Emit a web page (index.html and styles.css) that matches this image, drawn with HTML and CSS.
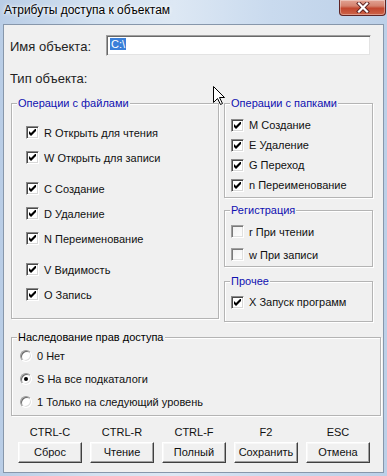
FILE: index.html
```html
<!DOCTYPE html>
<html lang="ru">
<head>
<meta charset="utf-8">
<title>Атрибуты доступа к объектам</title>
<link rel="stylesheet" href="styles.css">
</head>
<body>
<div class="window">
  <div class="titlebar">
    <span class="title">Атрибуты доступа к объектам</span>
    <div class="close">
      <svg width="14" height="11" viewBox="0 0 14 11">
        <path d="M3 1.5 L11 9.5 M11 1.5 L3 9.5" stroke="#5a2020" stroke-width="4" stroke-linecap="square"/>
        <path d="M3 1.5 L11 9.5 M11 1.5 L3 9.5" stroke="#ffffff" stroke-width="2.2" stroke-linecap="square"/>
      </svg>
    </div>
  </div>
  <div class="client">
    <div class="name-row">
      <span class="big-label name-label">Имя объекта:</span>
      <div class="input"><span class="sel">C:\</span></div>
    </div>
    <div class="big-label type-row">Тип объекта:</div>

    <div class="columns">
      <div class="group files">
        <span class="legend">Операции с файлами</span>
        <div class="sub">
          <div class="opt r25"><span class="cb on"></span>R Открыть для чтения</div>
          <div class="opt r25"><span class="cb on"></span>W Открыть для записи</div>
        </div>
        <div class="sub">
          <div class="opt r25"><span class="cb on"></span>C Создание</div>
          <div class="opt r25"><span class="cb on"></span>D Удаление</div>
          <div class="opt r25"><span class="cb on"></span>N Переименование</div>
        </div>
        <div class="sub">
          <div class="opt r25"><span class="cb on"></span>V Видимость</div>
          <div class="opt r25"><span class="cb on"></span>O Запись</div>
        </div>
      </div>

      <div class="rightcol">
        <div class="group folders">
          <span class="legend">Операции с папками</span>
          <div class="opt r20"><span class="cb on"></span>M Создание</div>
          <div class="opt r20"><span class="cb on"></span>E Удаление</div>
          <div class="opt r20"><span class="cb on"></span>G Переход</div>
          <div class="opt r20"><span class="cb on"></span>n Переименование</div>
        </div>
        <div class="group reg">
          <span class="legend">Регистрация</span>
          <div class="opt r23"><span class="cb"></span>r При чтении</div>
          <div class="opt r23"><span class="cb"></span>w При записи</div>
        </div>
        <div class="group misc">
          <span class="legend">Прочее</span>
          <div class="opt r22"><span class="cb on"></span>X Запуск программ</div>
        </div>
      </div>
    </div>

    <div class="group inherit">
      <span class="legend black">Наследование прав доступа</span>
      <div class="opt r23 radio-opt"><span class="rb"></span>0 Нет</div>
      <div class="opt r23 radio-opt"><span class="rb on"></span>S На все подкаталоги</div>
      <div class="opt r23 radio-opt"><span class="rb"></span>1 Только на следующий уровень</div>
    </div>

    <div class="buttons">
      <div class="btncol"><div class="key">CTRL-C</div><div class="btn">Сброс</div></div>
      <div class="btncol"><div class="key">CTRL-R</div><div class="btn">Чтение</div></div>
      <div class="btncol"><div class="key">CTRL-F</div><div class="btn">Полный</div></div>
      <div class="btncol"><div class="key">F2</div><div class="btn">Сохранить</div></div>
      <div class="btncol"><div class="key">ESC</div><div class="btn">Отмена</div></div>
    </div>
  </div>

  <svg class="cursor" width="13" height="20" viewBox="0 0 13 20">
    <path d="M0.5 0.5 L0.5 16.5 L4.5 12.5 L7.5 18.5 L9.5 17.5 L6.5 11.5 L11.5 11.5 Z" fill="#ffffff" stroke="#000000" stroke-width="1"/>
  </svg>
</div>
</body>
</html>
```

FILE: styles.css
```css
* { box-sizing: border-box; }
html, body { margin: 0; padding: 0; }
body {
  width: 387px;
  height: 476px;
  overflow: hidden;
  font-family: "Liberation Sans", Arial, sans-serif;
  font-size: 11px;
  color: #111;
  background: #c9d9ec;
}
.window {
  position: relative;
  width: 387px;
  height: 476px;
  padding: 0 3px 3px 3px;
  background: linear-gradient(90deg, #b9cde6 0%, #d4e2f1 25%, #dde8f4 45%, #c9daee 70%, #bcd0e8 100%);
  display: flex;
  flex-direction: column;
}
.titlebar {
  height: 24px;
  flex: none;
  display: flex;
  align-items: flex-start;
  justify-content: space-between;
}
.title {
  font-size: 12px;
  line-height: 14px;
  padding: 3px 0 0 1px;
  color: #000;
  text-shadow: 0 0 5px #ffffff, 0 0 3px #ffffff;
}
.close {
  width: 47px;
  height: 16px;
  margin-right: -2px;
  border: 1px solid #5e2424;
  border-top: none;
  border-radius: 0 0 4px 4px;
  background: linear-gradient(#e2a394 0%, #d4826e 40%, #c2472f 55%, #cd6449 100%);
  box-shadow: inset 0 0 0 1px rgba(255,255,255,0.35);
  display: flex;
  align-items: center;
  justify-content: center;
}
.close svg { display: block; }
.client {
  flex: 1;
  background: #f0f0f0;
  border: 1px solid #8797ab;
  display: flex;
  flex-direction: column;
}
.big-label {
  font-size: 13px;
  line-height: 14px;
  color: #222;
}
.name-row {
  margin-top: 10px;
  padding-left: 6px;
  display: flex;
  align-items: center;
  height: 21px;
}
.name-label {
  width: 96px;
  padding-top: 2px;
}
.input {
  width: 265px;
  height: 21px;
  background: #fff;
  border-style: solid;
  border-width: 1px;
  border-color: #a0a0a0 #f0f0f0 #f0f0f0 #a0a0a0;
  box-shadow: inset 1px 1px 0 #696969, inset -1px -1px 0 #e3e3e3;
  padding: 2px 0 0 3px;
  font-size: 11px;
  line-height: 12px;
}
.sel {
  display: inline-block;
  background: #3a7fd9;
  color: #fff;
  padding: 0 1px;
  height: 12px;
}
.type-row {
  margin-top: 16px;
  padding-left: 6px;
}
.columns {
  margin-top: 17px;
  padding-left: 7px;
  display: flex;
  gap: 5px;
  height: 219px;
}
.group {
  position: relative;
  border: 1px solid #b4b4b4;
  box-shadow: inset 1px 1px 0 #ffffff, 1px 1px 0 #ffffff;
}
.legend {
  position: absolute;
  top: -7px;
  left: 5px;
  padding: 0 1px;
  background: #f0f0f0;
  color: #1010b0;
  line-height: 13px;
  white-space: nowrap;
}
.legend.black { color: #000; }
.files {
  width: 208px;
  height: 216px;
  padding: 16px 0 0 14px;
  display: flex;
  flex-direction: column;
  gap: 6px;
}
.rightcol {
  width: 149px;
  display: flex;
  flex-direction: column;
}
.folders {
  height: 95px;
  padding: 11px 0 0 6px;
}
.reg {
  margin-top: 12px;
  height: 57px;
  padding: 9px 0 0 6px;
}
.misc {
  margin-top: 14px;
  height: 41px;
  padding: 9px 0 0 6px;
}
.opt {
  display: flex;
  align-items: center;
  gap: 5px;
  white-space: nowrap;
}
.r25 { height: 25px; }
.r20 { height: 20px; }
.r23 { height: 23px; }
.r22 { height: 22px; }
.cb {
  width: 13px;
  height: 13px;
  flex: none;
  background: #ffffff;
  border-style: solid;
  border-width: 1px;
  border-color: #8a8a8a #ffffff #ffffff #8a8a8a;
  box-shadow: inset 1px 1px 0 #4a4a4a, inset -1px -1px 0 #d8d8d8;
  position: relative;
}
.reg .cb {
  border-color: #a0a0a0 #ffffff #ffffff #a0a0a0;
  box-shadow: inset 1px 1px 0 #7a7a7a, inset -1px -1px 0 #e0e0e0;
  background: linear-gradient(135deg, #f0f0f0, #ffffff);
}
.cb.on::after {
  content: "";
  position: absolute;
  left: 2px;
  top: 2px;
  width: 7px;
  height: 7px;
  background: no-repeat center / 7px 7px url("data:image/svg+xml,%3Csvg xmlns='http://www.w3.org/2000/svg' viewBox='0 0 7 7'%3E%3Cpath d='M0 2 L2 4 L6 0 L7 0 L7 2 L2 7 L0 5 Z' fill='%23000'/%3E%3C/svg%3E");
}
.inherit {
  margin: 15px 0 0 7px;
  width: 370px;
  height: 79px;
  padding: 6px 0 0 8px;
}
.radio-opt { gap: 5px; }
.rb {
  width: 12px;
  height: 12px;
  flex: none;
  border-radius: 50%;
  background: #ffffff;
  border: 1px solid;
  border-color: #9a9a9a #ffffff #ffffff #9a9a9a;
  box-shadow: inset 1px 1px 0 #6a6a6a, inset -1px -1px 0 #e0e0e0;
  position: relative;
}
.rb.on::after {
  content: "";
  position: absolute;
  left: 3px;
  top: 3px;
  width: 4px;
  height: 4px;
  border-radius: 50%;
  background: #000;
}
.buttons {
  margin-top: 10px;
  padding-left: 14px;
  display: flex;
  gap: 8px;
}
.btncol {
  width: 64px;
  display: flex;
  flex-direction: column;
  align-items: center;
}
.key {
  line-height: 13px;
  height: 16px;
}
.btn {
  width: 64px;
  height: 21px;
  background: #f0f0f0;
  border-style: solid;
  border-width: 1px;
  border-color: #ffffff #404040 #404040 #ffffff;
  box-shadow: inset -1px -1px 0 #a0a0a0, inset 1px 1px 0 #f8f8f8;
  display: flex;
  align-items: center;
  justify-content: center;
  line-height: 13px;
}
.cursor {
  position: absolute;
  left: 213px;
  top: 86px;
}
```
